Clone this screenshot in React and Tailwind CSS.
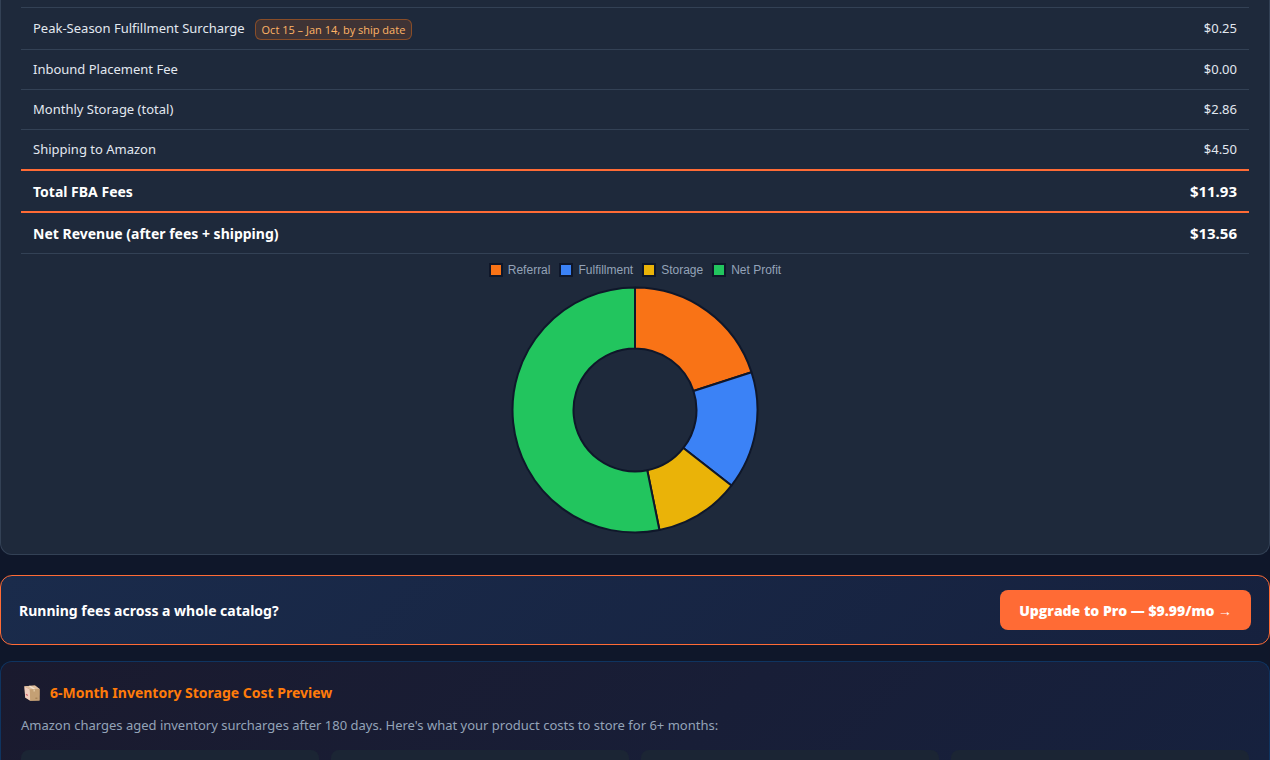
const ROWS = [
  { label: 'Peak-Season Fulfillment Surcharge', note: 'Oct 15 – Jan 14, by ship date', value: '$0.25', size: 'h-[42px] border-b' },
  { label: 'Inbound Placement Fee', value: '$0.00', size: 'h-10 border-b' },
  { label: 'Monthly Storage (total)', value: '$2.86', size: 'h-10 border-b' },
  { label: 'Shipping to Amazon', value: '$4.50', size: 'h-[39px]' },
]

const SLICES = [
  { name: 'Referral', value: 5.1, fill: '#f97316', swatch: 'bg-[#f97316]' },
  { name: 'Fulfillment', value: 3.97, fill: '#3b82f6', swatch: 'bg-[#3b82f6]' },
  { name: 'Storage', value: 2.86, fill: '#eab308', swatch: 'bg-[#eab308]' },
  { name: 'Net Profit', value: 13.56, fill: '#22c55e', swatch: 'bg-[#22c55e]' },
]

const OUTER = 122.5
const INNER = 61.5
const CENTER = 124

function point(radius, turn) {
  const angle = turn * Math.PI * 2
  return `${(CENTER + radius * Math.sin(angle)).toFixed(2)} ${(CENTER - radius * Math.cos(angle)).toFixed(2)}`
}

function Doughnut() {
  const total = SLICES.reduce((sum, slice) => sum + slice.value, 0)
  let turn = 0
  return (
    <svg viewBox="0 0 248 248" className="h-[248px] w-[248px]" role="img" aria-label="Fee breakdown">
      {SLICES.map((slice) => {
        const start = turn
        const end = turn + slice.value / total
        turn = end
        const large = end - start > 0.5 ? 1 : 0
        const d = `M${point(OUTER, start)}A${OUTER} ${OUTER} 0 ${large} 1 ${point(OUTER, end)}L${point(INNER, end)}A${INNER} ${INNER} 0 ${large} 0 ${point(INNER, start)}Z`
        return <path key={slice.name} d={d} fill={slice.fill} stroke="#0f172a" strokeWidth="2" strokeLinejoin="bevel" />
      })}
    </svg>
  )
}

function Package() {
  return (
    <svg viewBox="0 0 16 16" className="h-4 w-4" aria-hidden="true">
      <path d="M.4 1.2 11 .4l4.6 3.6-.1 11.6-9.2.2L1.2 12.4Z" fill="#c7a077" />
      <path d="M.4 1.2 5.8 4.4l.5 11.4-5.1-3.4Z" fill="#efcdbd" />
      <path d="M.4 1.2 11 .4l4.6 3.6-9.8.4Z" fill="#dfbf9f" />
      <path d="M5.4 1 10.4 4.2" stroke="#f3e3cf" strokeWidth="1.4" />
      <path d="m5.8 4.4.5 11.4 9.2-.2.1-11.6Z" fill="#c4a074" />
      <path d="M10.2 4.4v2.2" stroke="#e3c9a4" strokeWidth="1.4" />
      <path d="m2 9.2 1.8 1.2" stroke="#d0606d" strokeWidth="1.2" />
      <path d="M11.4 13.2h2" stroke="#9a764b" strokeWidth="1" />
    </svg>
  )
}

export default function App() {
  return (
    <div className="flex min-h-screen flex-col bg-[#0f172a] font-['Noto_Sans',sans-serif] text-[13px] text-[#e2e8f0]">
      <section className="rounded-b-xl border border-t-0 border-[#334155] bg-[#1e293b] px-5 pb-5">
        <table className="w-full border-separate border-spacing-0">
          <tbody>
            <tr aria-hidden="true">
              <td colSpan={2} className="h-2 border-b border-[#334155] p-0" />
            </tr>
            {ROWS.map((row) => (
              <tr key={row.label}>
                <th scope="row" className={`${row.size} border-[#334155] px-3 pt-px pb-0 text-left font-normal`}>
                  <span className="flex items-center gap-2.5">
                    {row.label}
                    {row.note && (
                      <span className="rounded-md border border-[#f97316]/40 bg-[#f97316]/15 px-1.5 font-['Open_Sans',sans-serif] text-[11px] leading-[19px] text-[#ffb366]">
                        {row.note}
                      </span>
                    )}
                  </span>
                </th>
                <td className={`${row.size} border-[#334155] px-3 pt-px pb-0 text-right`}>{row.value}</td>
              </tr>
            ))}
            <tr className="font-bold text-white">
              <th scope="row" className="h-[42px] border-t-2 border-[#ff6b35] px-3 pt-0.5 pb-0 text-left text-sm">Total FBA Fees</th>
              <td className="h-[42px] border-t-2 border-[#ff6b35] px-3 py-0 text-right text-[15px]">$11.93</td>
            </tr>
            <tr className="font-bold text-white">
              <th scope="row" className="h-[43px] border-t-2 border-b border-t-[#ff6b35] border-b-[#334155] px-3 pt-0.5 pb-0 text-left text-sm">Net Revenue (after fees + shipping)</th>
              <td className="h-[43px] border-t-2 border-b border-t-[#ff6b35] border-b-[#334155] px-3 py-0 text-right text-[15px]">$13.56</td>
            </tr>
          </tbody>
        </table>
        <div className="flex flex-col items-center">
          <ul className="flex h-8 items-center gap-[9px] font-['Liberation_Sans',sans-serif] text-xs text-[#94a3b8]">
            {SLICES.map((slice) => (
              <li key={slice.name} className="flex items-center gap-[5px]">
                <span className={`h-3.5 w-3.5 border-2 border-[#0f172a] ${slice.swatch}`} />
                {slice.name}
              </li>
            ))}
          </ul>
          <Doughnut />
        </div>
      </section>

      <section className="mt-5 flex items-center justify-between rounded-xl border border-[#ff6b35] bg-linear-135 from-[#1a2b4b] to-[#16213e] px-[18px] py-3.5">
        <strong className="pt-0.5 text-sm font-bold text-white">Running fees across a whole catalog?</strong>
        <button type="button" className="h-10 rounded-lg bg-[#ff6b35] px-[19px] pt-0.5 font-['Open_Sans',sans-serif] text-sm font-extrabold text-white">
          Upgrade to Pro — $9.99/mo →
        </button>
      </section>

      <section className="mt-4 flex grow flex-col rounded-t-xl border border-b-0 border-[#0f3460] bg-linear-135 from-[#1a1a2e] to-[#16213e] px-5 pt-5">
        <h2 className="flex h-[22px] items-center gap-2.5 pl-[3px] text-sm font-bold text-[#ff7b0a]">
          <Package />
          6-Month Inventory Storage Cost Preview
        </h2>
        <p className="mt-2.5 leading-[22px] text-[#94a3b8]">
          Amazon charges aged inventory surcharges after 180 days. Here's what your product costs to store for 6+ months:
        </p>
        <div className="mt-3.5 grid grow grid-cols-4 gap-3">
          <div className="rounded-t-lg bg-[#1b2534]" />
          <div className="rounded-t-lg bg-[#1b2534]" />
          <div className="rounded-t-lg bg-[#1b2534]" />
          <div className="rounded-t-lg bg-[#1b2534]" />
        </div>
      </section>
    </div>
  )
}
